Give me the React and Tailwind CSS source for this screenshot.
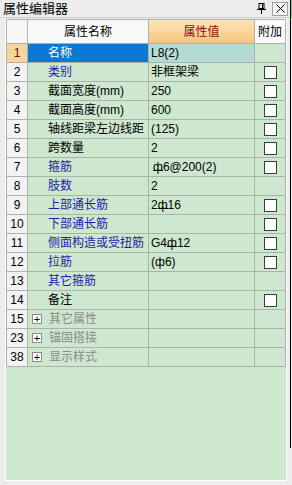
import React from 'react';

const FONT = { fontFamily: '"Liberation Sans", "Noto Sans CJK SC", sans-serif' };

const BLUE = 'text-[#1c1ca8]';
const BLACK = 'text-[#000000]';
const GRAY = 'text-[#8a8a8a]';

// steel grade symbol: ф with a bar through it
const Rebar = ({ plain }) => (
  <span className="relative inline-block">
    ф
    {!plain && <span className="absolute left-0 right-0 top-[9px] h-px bg-black" />}
  </span>
);

const rows = [
  { n: 1, name: '名称', value: 'L8(2)', selected: true },
  { n: 2, name: '类别', color: BLUE, value: '非框架梁', check: true },
  { n: 3, name: '截面宽度(mm)', color: BLACK, value: '250', check: true },
  { n: 4, name: '截面高度(mm)', color: BLACK, value: '600', check: true },
  { n: 5, name: '轴线距梁左边线距', color: BLACK, value: '(125)', check: true },
  { n: 6, name: '跨数量', color: BLACK, value: '2', check: true },
  { n: 7, name: '箍筋', color: BLUE, value: <span className="pl-[2px]"><Rebar />6@200(2)</span>, check: true },
  { n: 8, name: '肢数', color: BLUE, value: '2' },
  { n: 9, name: '上部通长筋', color: BLUE, value: <>2<Rebar />16</>, check: true },
  { n: 10, name: '下部通长筋', color: BLUE, value: '', check: true },
  { n: 11, name: '侧面构造或受扭筋', color: BLUE, value: <>G4<Rebar />12</>, check: true },
  { n: 12, name: '拉筋', color: BLUE, value: <>(<Rebar plain />6)</>, check: true },
  { n: 13, name: '其它箍筋', color: BLUE, value: '' },
  { n: 14, name: '备注', color: BLACK, value: '', check: true },
  { n: 15, name: '其它属性', color: GRAY, group: true },
  { n: 23, name: '锚固搭接', color: GRAY, group: true },
  { n: 38, name: '显示样式', color: GRAY, group: true },
];

const cell = 'h-[19px] border-r border-b border-[#a9b3a9] flex items-center';

const Row = ({ r }) => (
  <div className="grid grid-cols-[21px_121px_106px_31px]">
    <div className={`${cell} justify-center ${r.selected ? 'bg-[#f9d49d] text-[#5a1a00]' : 'bg-[#f3f3f3] text-black'}`}>
      {r.n}
    </div>
    <div className={`${cell} ${r.selected ? 'bg-[#0a78d4] text-white' : r.color}`}>
      {r.group ? (
        <span className="ml-[4px] mr-[7px] w-[10px] h-[10px] bg-white border border-[#8c8c8c] flex items-center justify-center text-black text-[11px] leading-none">
          +
        </span>
      ) : (
        <span className="w-[20px]" />
      )}
      <span className="whitespace-nowrap">{r.name}</span>
    </div>
    <div className={`${cell} pl-[2px] whitespace-nowrap ${r.selected ? 'bg-[#b5dcd4]' : ''}`}>{r.value}</div>
    <div className={`${cell} justify-center`}>
      {r.check && <span className="w-[13px] h-[13px] bg-white border border-[#3c3c3c]" />}
    </div>
  </div>
);

export default function App() {
  return (
    <div className="w-[292px] h-[485px] bg-[#ececec] flex text-[12px] leading-none" style={FONT}>
      <div className="w-[290px] h-full flex flex-col">
        <div className="h-[18px] flex items-center pl-[3px] pr-[2px] border-b border-[#d0d0d0]">
          <span className="text-[13px] text-black">属性编辑器</span>
          <div className="ml-auto flex items-center gap-[6px]">
            <svg width="9" height="11" viewBox="0 0 9 11">
              <rect x="2" y="0.5" width="5" height="5" fill="none" stroke="#000" />
              <path d="M0 6.5h9M4.5 6.5v4.5" stroke="#000" />
              <path d="M5.5 1v4.5" stroke="#000" />
            </svg>
            <span className="w-[16px] h-[14px] border border-[#a0a0a0] bg-[#f4f4f4] flex items-center justify-center">
              <svg width="9" height="9" viewBox="0 0 9 9">
                <path d="M0.5 0.5l8 8M8.5 0.5l-8 8" stroke="#000" />
              </svg>
            </span>
          </div>
        </div>
        <div className="flex-1 pt-px pl-[5px] pb-[4px] pr-[3px]">
          <div className="h-full bg-[#cde8cf] border-l border-b border-r border-white">
            <div className="border-l border-t border-[#a9b3a9] w-[280px]">
              <div className="grid grid-cols-[21px_121px_106px_31px] h-[24px]">
                <div className="border-r border-b border-[#a9b3a9] bg-[#f6f6f6]" />
                <div className="border-r border-b border-[#a9b3a9] bg-[#f8f8f8] flex items-center justify-center text-black text-[12px]">
                  属性名称
                </div>
                <div className="border-r border-b border-[#a9b3a9] bg-gradient-to-b from-[#fde6ba] to-[#f6c47c] flex items-center justify-center text-[#8b1010] text-[12px]">
                  属性值
                </div>
                <div className="border-r border-b border-[#a9b3a9] bg-[#fafafa] flex items-center justify-center text-black">
                  附加
                </div>
              </div>
              {rows.map((r) => (
                <Row key={r.n} r={r} />
              ))}
            </div>
          </div>
        </div>
      </div>
      <div className="w-px h-[448px] bg-black" />
      <div className="w-px h-[18px] bg-[#7fd07f]" />
    </div>
  );
}
